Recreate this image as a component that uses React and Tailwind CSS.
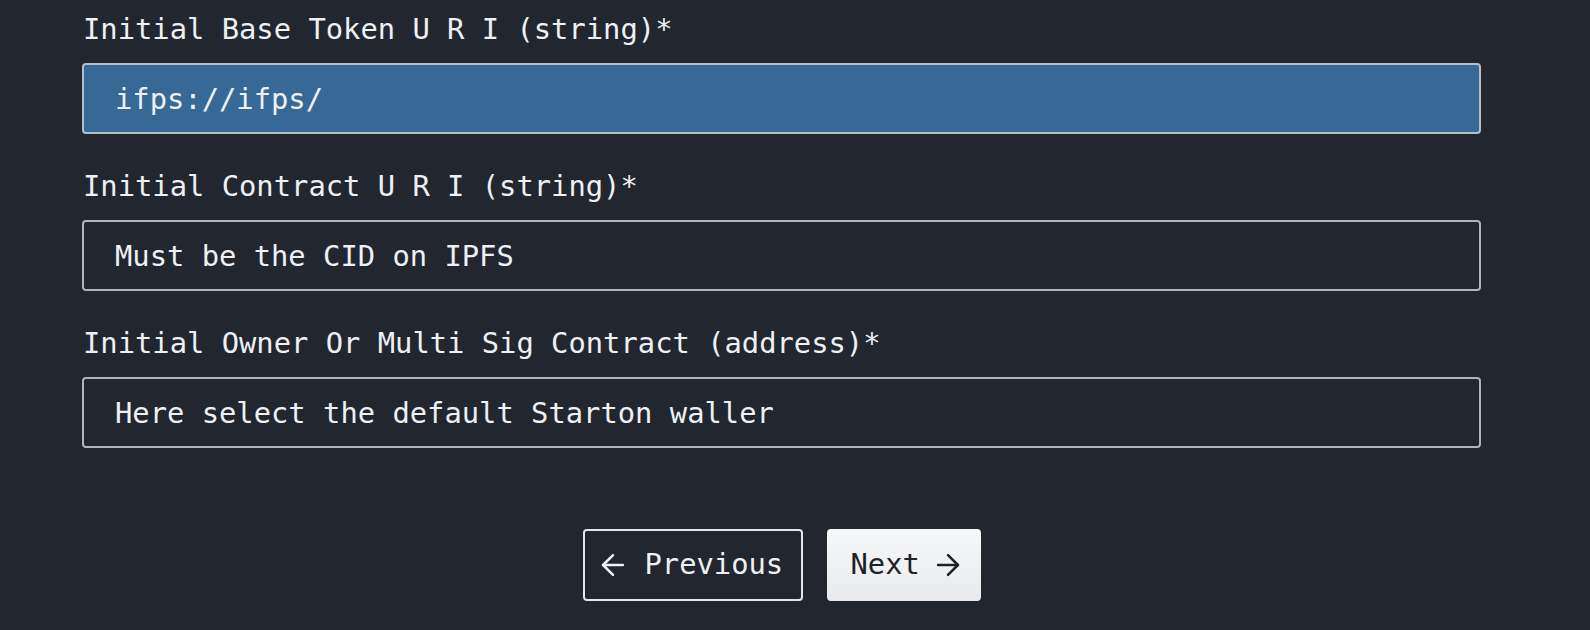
import React from 'react';
import { ArrowLeft, ArrowRight } from 'lucide-react';

const fields = [
  {
    label: 'Initial Base Token U R I (string)*',
    value: 'ifps://ifps/',
    active: true
  },
  {
    label: 'Initial Contract U R I (string)*',
    value: 'Must be the CID on IPFS'
  },
  {
    label: 'Initial Owner Or Multi Sig Contract (address)*',
    value: 'Here select the default Starton waller'
  }
];

const App = () => {
  return (
    <div className="w-[1590px] h-[630px] overflow-hidden bg-[#22262e] text-[#eef0f3] font-['DejaVu_Sans_Mono',monospace] text-[28.8px]">
      <div className="ml-[82px] w-[1399px] pt-[11px] flex flex-col gap-[34px]">
        {fields.map((field) => (
          <div key={field.label} className="flex flex-col gap-[16px]">
            <label className="block h-[36px] leading-[36px] pl-[1px] whitespace-nowrap">
              {field.label}
            </label>
            <input
              readOnly
              defaultValue={field.value}
              className={
                field.active
                  ? 'h-[71px] w-full rounded-[4px] border-2 border-[#b3c0cc] bg-[#376896] px-[31px] text-[#eef0f3] outline-none'
                  : 'h-[71px] w-full rounded-[4px] border-2 border-[#a9b6c2] bg-transparent px-[31px] text-[#eef0f3] outline-none'
              }
            />
          </div>
        ))}

        {/* Navigation */}
        <div className="flex justify-center gap-[24px] mt-[47px]">
          <button className="flex items-center gap-[15px] h-[72px] w-[220px] pl-[11px] rounded-[4px] border-2 border-[#e4e6ea] text-[#eef0f3]">
            <ArrowLeft size={34} strokeWidth={1.8} />
            <span>Previous</span>
          </button>
          <button className="flex items-center gap-[11px] h-[72px] w-[154px] pl-[24px] rounded-[4px] bg-gradient-to-b from-[#f7f8f9] to-[#e8eaed] text-[#1f2329]">
            <span>Next</span>
            <ArrowRight size={34} strokeWidth={1.8} />
          </button>
        </div>
      </div>
    </div>
  );
};

export default App;
